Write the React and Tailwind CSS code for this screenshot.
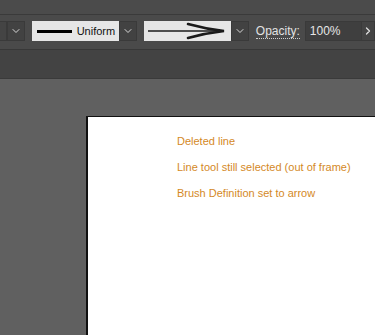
import { ChevronDown, ChevronRight } from 'lucide-react';

function Chevron() {
  return (
    <div className="flex h-[20px] w-[18px] items-center justify-center border border-[#3a3a3a] bg-[#424242]">
      <ChevronDown className="h-3 w-3 text-[#d8d8d8]" strokeWidth={2} />
    </div>
  );
}

export default function App() {
  return (
    <div className="flex h-[335px] w-[375px] flex-col overflow-hidden bg-[#606060] font-['Liberation_Sans',Arial,sans-serif]">
      {/* top strip */}
      <div className="h-[15px] shrink-0 border-b border-[#3a3a3a] bg-[#4b4b4b]" />

      {/* control bar */}
      <div className="flex h-[35px] shrink-0 items-center border-b border-[#383838] bg-[#4a4a4a] pb-[2px]">
        <div className="h-[20px] w-[7px] border border-l-0 border-[#3a3a3a] bg-[#444444]" />
        <Chevron />

        <div className="ml-[7px] flex h-[20px] w-[89px] items-center bg-[#e6e6e6] pl-[5px]">
          <div className="h-[3px] w-[35px] bg-black" />
          <span className="ml-[5px] text-[11px] text-[#111]">Uniform</span>
        </div>
        <Chevron />

        <div className="ml-[7px] flex h-[20px] w-[87px] items-center bg-[#e6e6e6]">
          <svg width="87" height="20" viewBox="0 0 87 20">
            <line x1="4" y1="10" x2="78" y2="10" stroke="#1a1a1a" strokeWidth="1.6" />
            <path d="M44 3 Q62 8 80 10 Q62 12 44 17" fill="none" stroke="#1a1a1a" strokeWidth="2.6" strokeLinecap="round" />
          </svg>
        </div>
        <Chevron />

        <span className="ml-[7px] border-b border-dotted border-[#cfcfcf] text-[12px] leading-[14px] text-[#e2e2e2]">Opacity:</span>

        <div className="ml-[5px] flex h-[20px] w-[58px] items-center border border-[#3a3a3a] bg-[#3f3f3f] pl-[4px]">
          <span className="text-[12px] text-[#e6e6e6]">100%</span>
        </div>
        <div className="flex h-[20px] w-[13px] items-center justify-center border border-l-0 border-[#3a3a3a] bg-[#444444]">
          <ChevronRight className="h-3 w-3 text-[#e0e0e0]" strokeWidth={2.5} />
        </div>
      </div>

      {/* panel strip */}
      <div className="h-[29px] shrink-0 border-b border-[#3a3a3a] bg-[#434343]" />

      {/* canvas */}
      <div className="flex flex-1 pl-[86px] pt-[37px]">
        <div className="flex-1 border-l-2 border-t border-[#111] bg-white pl-[89px] pt-[11px]">
          <div className="flex flex-col text-[11px] leading-[26px] text-[#d4891f]">
            <span>Deleted line</span>
            <span>Line tool still selected (out of frame)</span>
            <span>Brush Definition set to arrow</span>
          </div>
        </div>
      </div>
    </div>
  );
}
